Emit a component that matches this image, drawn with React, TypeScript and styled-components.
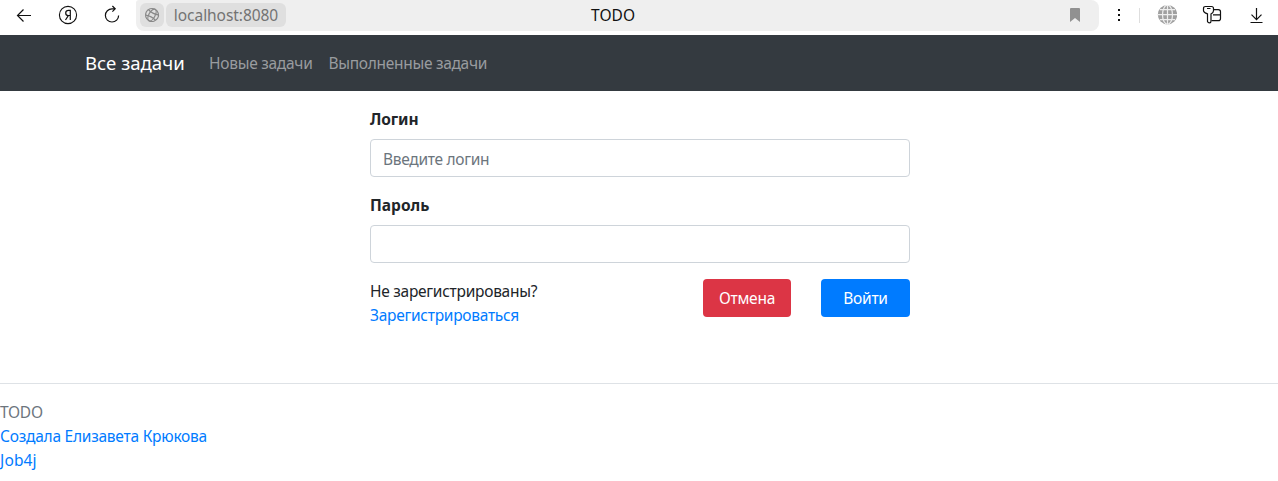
import React from 'react';
import styled, { createGlobalStyle } from 'styled-components';

const GlobalStyle = createGlobalStyle`
  *, *::before, *::after { box-sizing: border-box; }
  html, body { margin: 0; padding: 0; overflow: hidden; }
  body {
    background: #fff;
    color: #212529;
    font: 400 15.5px/24px "Noto Sans", "Open Sans", sans-serif;
  }
`;

const Label = styled.span<{ $size?: number; $track?: number }>`
  display: inline-block;
  white-space: nowrap;
  font-size: ${(p) => p.$size ?? 15.5}px;
  letter-spacing: ${(p) => p.$track ?? -0.27}px;
`;

const BrowserBar = styled.header`
  display: flex;
  height: 35px;
  background: #fff;
  color: #111;
`;

const Controls = styled.div`
  display: flex;
  width: 136px;
  padding: 5px 0 0 14px;
  gap: 24px;
`;

const Icon = styled.svg`
  display: block;
  flex: none;
  width: 20px;
  height: 20px;
  fill: none;
  stroke: currentColor;
  stroke-width: 1.2;
`;

const AddressBar = styled.div`
  display: flex;
  width: 963px;
  height: 31px;
  padding: 3px 14px 4px 4px;
  background: #efefef;
  border-radius: 3px 8px 8px 8px;
`;

const Chip = styled.div<{ $width: number }>`
  display: flex;
  align-items: center;
  justify-content: center;
  width: ${(p) => p.$width}px;
  height: 24px;
  margin-right: 2px;
  border-radius: 6px;
  background: #dfdfdf;
  color: #737373;
`;

const PageTitle = styled.div`
  flex: 1;
  padding: 0 0 0 303px;
  color: #111;
`;

const Tools = styled.div`
  display: flex;
  align-items: flex-start;
  padding-top: 5px;
  padding-left: 10px;
`;

const Divider = styled.span`
  width: 1px;
  height: 15px;
  margin: 3px 17px 0 10px;
  background: #dedede;
`;

const Gap = styled.span<{ $w: number }>`
  width: ${(p) => p.$w}px;
`;

const Navbar = styled.nav`
  display: flex;
  align-items: center;
  height: 56px;
  padding-left: 85px;
  background: #343a40;
`;

const Brand = styled.a`
  width: 116px;
  padding-top: 1px;
  color: #fff;
`;

const NavLink = styled.a`
  margin-left: 8px;
  padding-right: 8px;
  color: #999c9f;
`;

const Form = styled.form`
  width: 540px;
  height: 292px;
  margin: 0 0 0 370px;
  padding-top: 16px;
`;

const Field = styled.div`
  display: flex;
  flex-direction: column;
  margin-bottom: 16px;
`;

const FieldName = styled.label`
  height: 24px;
  margin-bottom: 8px;
  font-weight: 700;
`;

const Input = styled.input`
  width: 100%;
  height: 38px;
  padding: 8px 12px 6px;
  border: 1px solid #ced4da;
  border-radius: 4px;
  background: #fff;
  color: #495057;
  font: inherit;
  letter-spacing: -0.3px;
  outline: none;
  &::placeholder { color: #6c757d; opacity: 1; }
`;

const Actions = styled.div`
  display: flex;
`;

const Register = styled.div`
  display: flex;
  flex-direction: column;
  align-items: flex-start;
  width: 333px;
`;

const Link = styled.a`
  color: #007bff;
`;

const Button = styled.button<{ $tone: 'danger' | 'primary' }>`
  width: ${(p) => (p.$tone === 'danger' ? 88 : 89)}px;
  height: 38px;
  margin-right: ${(p) => (p.$tone === 'danger' ? 30 : 0)}px;
  padding: 0;
  border: 0;
  border-radius: 4px;
  background: ${(p) => (p.$tone === 'danger' ? '#dc3545' : '#007bff')};
  color: #fff;
  font: inherit;
`;

const Footer = styled.footer`
  display: flex;
  flex-direction: column;
  align-items: flex-start;
  padding-top: 16px;
  border-top: 1px solid #dee2e6;
`;

const Muted = styled.span`
  color: #6c757d;
`;

export default function App() {
  return (
    <>
      <GlobalStyle />
      <BrowserBar>
        <Controls>
          <Icon viewBox="0 0 20 20"><path d="M17 10.5H3.5M9.5 4.5l-6 6 6 6" /></Icon>
          <Icon viewBox="0 0 20 20">
            <circle cx="10" cy="10" r="8.6" strokeWidth="1.1" />
            <path d="M12.3 15V5.3h-1.8c-1.8 0-2.8 1-2.8 2.6s1 2.6 2.8 2.6h1.8M10.3 10.6L7.5 15" />
          </Icon>
          <Icon viewBox="0 0 20 20"><path d="M16.6 10.4a6.6 6.6 0 1 1-6.6-6.6h3M10.4 1l2.8 2.8-2.8 2.8" /></Icon>
        </Controls>
        <AddressBar>
          <Chip $width={24}>
            <Icon viewBox="0 0 20 20">
              <g transform="rotate(28 10 10)" stroke="#888">
                <circle cx="10" cy="10" r="6.5" />
                <ellipse cx="10" cy="10" rx="3.1" ry="6.5" />
                <path d="M4.5 7q5.5 2 11 0M4.5 13q5.5-2 11 0" />
              </g>
            </Icon>
          </Chip>
          <Chip $width={120}><Label $track={-0.06}>localhost:8080</Label></Chip>
          <PageTitle><Label $track={0.1}>TODO</Label></PageTitle>
          <Icon viewBox="0 0 20 20">
            <path d="M5 6q0-1 1-1h8q1 0 1 1V19l-5-4-5 4z" fill="#919191" stroke="none" />
          </Icon>
        </AddressBar>
        <Tools>
          <Icon viewBox="0 0 20 20">
            <path d="M9 4h2v2H9zM9 9h2v2H9zM9 14h2v2H9z" fill="#111" stroke="none" />
          </Icon>
          <Divider />
          <Icon viewBox="0 0 20 20">
            <circle cx="10.5" cy="9.7" r="9.7" fill="#a0a0a0" stroke="none" />
            <path d="M10.5 0v19.4M1 9.7h19M3 4.7h15M3 14.7h15" stroke="#eee" />
            <ellipse cx="10.5" cy="9.7" rx="5" ry="9.6" stroke="#eee" />
          </Icon>
          <Gap $w={25} />
          <Icon viewBox="0 0 20 20">
            <path d="M11.5 4.6h4.8q2.2 0 2.2 2.2v6.6q0 2.2-2.2 2.2H9.5M11 9.8h7.5" />
            <path d="M3.5 1.5h6q2 0 2 2v2.2q0 1.8-2.5 3.2v7q0 2-1.5 2T5.5 16.5V8.9Q1.5 7.5 1.5 5.7V3.5q0-2 2-2zM5 3.5h3.5" fill="#fff" />
          </Icon>
          <Gap $w={24} />
          <Icon viewBox="0 0 20 20"><path d="M10.5 3v11.7M5.5 9.7l5 5 5-5M4.5 17.5h12" /></Icon>
        </Tools>
      </BrowserBar>
      <Navbar>
        <Brand><Label $size={18.6} $track={0}>Все задачи</Label></Brand>
        <NavLink><Label>Новые задачи</Label></NavLink>
        <NavLink><Label $track={-0.3}>Выполненные задачи</Label></NavLink>
      </Navbar>
      <Form>
        <Field>
          <FieldName htmlFor="login"><Label $track={-0.1}>Логин</Label></FieldName>
          <Input id="login" placeholder="Введите логин" />
        </Field>
        <Field>
          <FieldName htmlFor="password"><Label $track={0}>Пароль</Label></FieldName>
          <Input id="password" type="password" />
        </Field>
        <Actions>
          <Register>
            <Label>Не зарегистрированы?</Label>
            <Link><Label>Зарегистрироваться</Label></Link>
          </Register>
          <Button type="button" $tone="danger"><Label>Отмена</Label></Button>
          <Button type="button" $tone="primary"><Label>Войти</Label></Button>
        </Actions>
      </Form>
      <Footer>
        <Muted><Label>TODO</Label></Muted>
        <Link><Label $track={-0.24}>Создала Елизавета Крюкова</Label></Link>
        <Link><Label $track={0.15}>Job4j</Label></Link>
      </Footer>
    </>
  );
}
